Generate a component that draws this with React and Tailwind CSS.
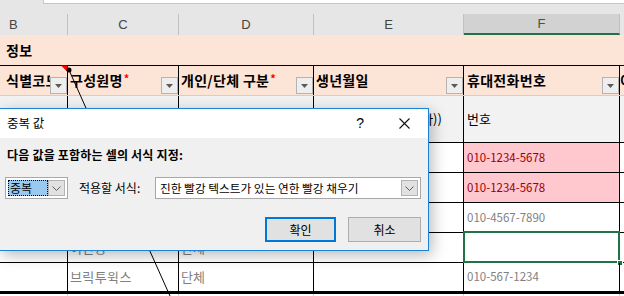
import React from 'react';

const FilterButton = () => (
  <div className="w-[17px] h-[17px] shrink-0 self-end mb-[1px] bg-[#eeeeee] border border-[#b4b4b4] flex items-center justify-center">
    <svg width="7" height="4" viewBox="0 0 7 4">
      <path d="M0 0 L7 0 L3.5 4 Z" fill="#5a5a5a" />
    </svg>
  </div>
);

const Chevron = () => (
  <svg width="9" height="5" viewBox="0 0 9 5" fill="none">
    <path d="M0.5 0.5 L4.5 4.5 L8.5 0.5" stroke="#5c5c5c" strokeWidth="1" />
  </svg>
);

const HeaderCell = ({ w, children, pl = 'pl-[2px]' }) => (
  <div className={`${w} shrink-0 h-full border-r border-black flex items-center overflow-hidden`}>
    <div className={`flex-1 min-w-0 overflow-hidden whitespace-nowrap font-bold text-[14px] tracking-[0.3px] text-black ${pl}`}>
      {children}
    </div>
    <FilterButton />
  </div>
);

const Cell = ({ w, className = '', children }) => (
  <div className={`${w} shrink-0 h-full border-r border-black flex items-center overflow-hidden whitespace-nowrap relative ${className}`}>
    {children}
  </div>
);

const Star = () => <span className="text-[#ff0000] text-[11px] align-top ml-[1px]">*</span>;

export default function App() {
  const rows = [
    { f: '010-1234-5678', dup: true },
    { f: '010-1234-5678', dup: true },
    { f: '010-4567-7890' },
  ];

  return (
    <div className="w-[624px] h-[296px] relative overflow-hidden bg-white font-['Noto_Sans_CJK_KR','Noto_Sans',sans-serif]">
      {/* formula bar edge */}
      <div className="h-[14px] bg-[#e6e6e6] flex">
        <div className="ml-[43px] flex-1 h-[4px] bg-white border-b border-l border-[#c6c6c6]" />
      </div>

      {/* column letters */}
      <div className="h-[21px] flex bg-[#e6e6e6] text-[13px] text-[#444444] font-['Liberation_Sans',sans-serif]">
        <div className="w-[68px] shrink-0 border-r border-[#c0c0c0] flex items-center pl-[9px]">B</div>
        <div className="w-[111px] shrink-0 border-r border-[#c0c0c0] flex items-center justify-center">C</div>
        <div className="w-[135px] shrink-0 border-r border-[#c0c0c0] flex items-center justify-center">D</div>
        <div className="w-[150px] shrink-0 border-r border-[#c0c0c0] flex items-center justify-center">E</div>
        <div className="w-[156px] shrink-0 border-r border-[#c0c0c0] bg-[#d2d2d2] border-b-2 border-b-[#217346] flex items-center justify-center text-[#3b5a3b]">F</div>
        <div className="flex-1" />
      </div>

      {/* row 1 */}
      <div className="h-[31px] bg-[#fce4d6] border-b border-black flex items-center pl-[6px] font-bold text-[14px] tracking-[0.3px] text-black">
        정보
      </div>

      {/* row 2 headers */}
      <div className="h-[30px] bg-[#fce4d6] border-b border-[#d0d0d0] flex">
        <HeaderCell w="w-[68px]" pl="pl-[6px]">식별코드</HeaderCell>
        <HeaderCell w="w-[111px]">구성원명<Star /></HeaderCell>
        <HeaderCell w="w-[135px]">개인/단체 구분<Star /></HeaderCell>
        <HeaderCell w="w-[150px]">생년월일</HeaderCell>
        <HeaderCell w="w-[156px]" pl="pl-[3px]">휴대전화번호</HeaderCell>
        <div className="flex-1 overflow-hidden whitespace-nowrap font-bold text-[14px] flex items-center">이메일</div>
      </div>

      {/* row 3 */}
      <div className="h-[47px] bg-[#f2f2f2] border-b border-black flex text-[13px] text-black">
        <Cell w="w-[68px]" />
        <Cell w="w-[111px]" />
        <Cell w="w-[135px]" />
        <Cell w="w-[150px]" className="pl-[3px]">(예: 1990-01-01 (8자))</Cell>
        <Cell w="w-[156px]" className="pl-[3px]">번호</Cell>
        <div className="flex-1" />
      </div>

      {/* data rows */}
      {rows.map((r, i) => (
        <div key={i} className="h-[30px] border-b border-black flex text-[12px]">
          <Cell w="w-[68px]" />
          <Cell w="w-[111px]" />
          <Cell w="w-[135px]" />
          <Cell w="w-[150px]" />
          <Cell
            w="w-[156px]"
            className={`pl-[3px] text-[11.5px] ${r.dup ? 'bg-[#ffc7ce] text-[#9c0006]' : 'text-[#7f7f7f]'}`}
          >
            {r.f}
          </Cell>
          <div className="flex-1" />
        </div>
      ))}

      <div className="h-[30px] border-b border-black flex text-[13px]">
        <Cell w="w-[68px]" />
        <Cell w="w-[111px]" className="pl-[2px] text-[#7f7f7f]">이민영</Cell>
        <Cell w="w-[135px]" className="pl-[2px] text-[#7f7f7f]">단체</Cell>
        <Cell w="w-[150px]" />
        <Cell w="w-[156px]" className="overflow-visible">
          <div className="absolute left-[-1px] top-[-2px] right-[-1px] bottom-[-1px] border-2 border-[#217346]" />
          <div className="absolute right-[-4px] bottom-[-4px] w-[6px] h-[6px] bg-[#217346] border border-white" />
        </Cell>
        <div className="flex-1" />
      </div>

      <div className="h-[31px] border-b-[3px] border-black flex text-[13px]">
        <Cell w="w-[68px]" />
        <Cell w="w-[111px]" className="pl-[2px] text-[#7f7f7f] tracking-[0.4px]">브릭투윅스</Cell>
        <Cell w="w-[135px]" className="pl-[2px] text-[#7f7f7f]">단체</Cell>
        <Cell w="w-[150px]" />
        <Cell w="w-[156px]" className="pl-[3px] text-[11.5px] text-[#7f7f7f]">010-567-1234</Cell>
        <div className="flex-1" />
      </div>

      <div className="flex h-[6px]">
        <div className="w-[68px] border-r border-[#d4d4d4]" />
        <div className="w-[111px] border-r border-[#d4d4d4]" />
        <div className="w-[135px] border-r border-[#d4d4d4]" />
        <div className="w-[150px] border-r border-[#d4d4d4]" />
        <div className="w-[156px] border-r border-[#d4d4d4]" />
      </div>

      {/* comment connector */}
      <svg className="absolute left-0 top-0 pointer-events-none" width="624" height="296">
        <polygon points="61,65.5 67.5,65.5 67.5,72" fill="#ff0000" />
        <line x1="69" y1="70" x2="170" y2="296" stroke="#000" strokeWidth="1" />
        <circle cx="69" cy="70" r="2.5" fill="#000" />
      </svg>

      {/* dialog */}
      <div className="absolute left-[-1px] top-[108px] w-[430px] h-[143px] border border-[#1883d7] bg-[#f0f0f0] shadow-[3px_4px_14px_rgba(0,0,0,0.28)] flex flex-col text-[12px] text-black">
        <div className="h-[29px] bg-white flex items-center shrink-0">
          <span className="pl-[7px] text-[12.5px]">중복 값</span>
          <span className="ml-auto mr-[35px] text-[14px] font-['Liberation_Sans',sans-serif]">?</span>
          <svg className="mr-[18px]" width="11" height="11" viewBox="0 0 11 11">
            <path d="M0.5 0.5 L10.5 10.5 M10.5 0.5 L0.5 10.5" stroke="#111" strokeWidth="1.1" />
          </svg>
        </div>

        <div className="mt-[9px] h-[16px] leading-[16px] pl-[7px] font-bold tracking-[0.2px]">다음 값을 포함하는 셀의 서식 지정:</div>

        <div className="mt-[14px] h-[22px] flex items-center">
          <div className="ml-[5px] w-[63px] h-[22px] border border-[#a8a8a8] bg-white flex items-stretch p-[2px]">
            <div className="flex-1 bg-[#99c9ef] border border-dotted border-black flex items-center pl-[1px] leading-none">중복</div>
            <div className="w-[17px] bg-[#e1e1e1] border border-[#b2b2b2] flex items-center justify-center">
              <Chevron />
            </div>
          </div>
          <span className="ml-[11px]">적용할 서식:</span>
          <div className="ml-auto mr-[7px] w-[266px] h-[22px] border border-[#a8a8a8] bg-white flex items-stretch p-[2px]">
            <div className="flex-1 flex items-center pl-[2px] whitespace-nowrap overflow-hidden text-[11.7px]">진한 빨강 텍스트가 있는 연한 빨강 채우기</div>
            <div className="w-[17px] bg-[#e1e1e1] border border-[#b2b2b2] flex items-center justify-center">
              <Chevron />
            </div>
          </div>
        </div>

        <div className="mt-[18px] flex justify-end pr-[7px] gap-[12px]">
          <button className="w-[71px] h-[25px] bg-[#e1e1e1] border-2 border-[#0078d7] flex items-center justify-center">확인</button>
          <button className="w-[73px] h-[25px] bg-[#e1e1e1] border border-[#adadad] flex items-center justify-center">취소</button>
        </div>
      </div>
    </div>
  );
}
